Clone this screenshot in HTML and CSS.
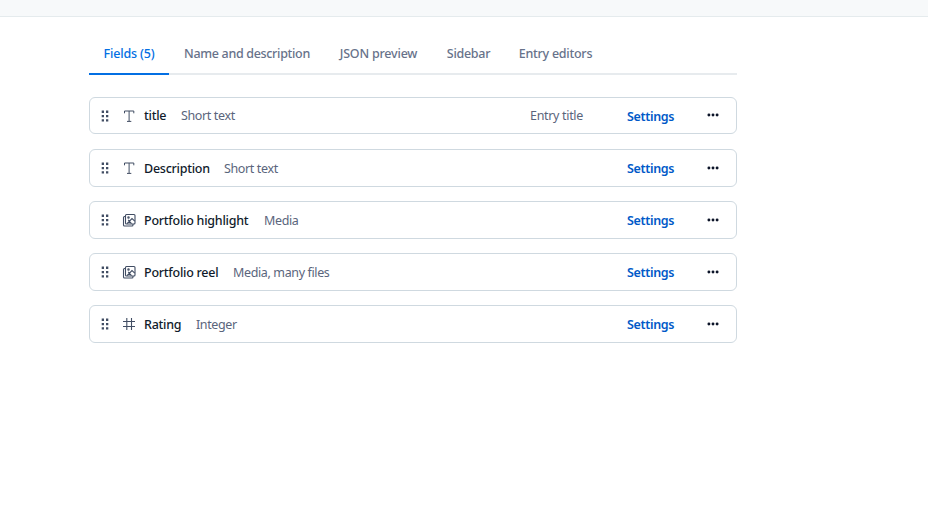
FILE: index.html
```html
<!DOCTYPE html>
<html lang="en">
<head>
<meta charset="utf-8">
<title>Content model fields</title>
<link rel="stylesheet" href="styles.css">
</head>
<body>
<svg class="defs" width="0" height="0">
  <symbol id="drag" viewBox="0 0 8 12"><path d="M.7 .6h2.300v2.300h-2.300zM5 .6h2.300v2.300h-2.300zM.7 4.900h2.300v2.300h-2.300zM5 4.900h2.300v2.300h-2.300zM.7 9.200h2.300v2.300h-2.300zM5 9.200h2.300v2.300h-2.300z" fill="currentColor"/></symbol>
  <symbol id="text" viewBox="0 0 14 14"><path d="M2.500 4.300V2H11.800V4.300M7.100 2V12.300M5 12.400H9.300" fill="none" stroke="currentColor"/></symbol>
  <symbol id="media" viewBox="0 0 14 14"><g fill="none" stroke="currentColor" stroke-width="1.100"><rect x="3.500" y="1.500" width="9.500" height="9.500" rx="1"/><path d="M3.500 3.500H2.500Q1.500 3.500 1.500 4.500V12Q1.500 13 2.500 13H10Q11 13 11 12V11M5 10.700L10 5.600L12.800 8.100M6.200 6.800L9.500 10.700"/><circle cx="6.500" cy="4.500" r=".7"/></g></symbol>
  <symbol id="number" viewBox="0 0 14 14"><path d="M4.800 1V13M9.500 1V13M1 4.500H13M1 9.500H13" fill="none" stroke="currentColor" stroke-width="1.100"/></symbol>
  <symbol id="more" viewBox="0 0 12 4"><g fill="currentColor"><circle cx="1.900" cy="2" r="1.450"/><circle cx="6" cy="2" r="1.450"/><circle cx="10.100" cy="2" r="1.450"/></g></symbol>
</svg>
<header class="topbar"></header>
<main class="content">
  <nav class="tabs">
    <a class="tab active">Fields (5)</a>
    <a class="tab tab-name">Name and description</a>
    <a class="tab tab-json">JSON preview</a>
    <a class="tab tab-sidebar">Sidebar</a>
    <a class="tab tab-editors">Entry editors</a>
  </nav>
  <section class="fields">
    <div class="field first"><svg class="drag"><use href="#drag"/></svg><svg class="type"><use href="#text"/></svg><span class="name n-title">title</span><span class="kind">Short text</span><span class="entry">Entry title</span><a class="settings">Settings</a><svg class="more"><use href="#more"/></svg></div>
    <div class="field"><svg class="drag"><use href="#drag"/></svg><svg class="type"><use href="#text"/></svg><span class="name n-description">Description</span><span class="kind">Short text</span><a class="settings">Settings</a><svg class="more"><use href="#more"/></svg></div>
    <div class="field"><svg class="drag"><use href="#drag"/></svg><svg class="type"><use href="#media"/></svg><span class="name n-highlight">Portfolio highlight</span><span class="kind">Media</span><a class="settings">Settings</a><svg class="more"><use href="#more"/></svg></div>
    <div class="field"><svg class="drag"><use href="#drag"/></svg><svg class="type"><use href="#media"/></svg><span class="name n-reel">Portfolio reel</span><span class="kind">Media, many files</span><a class="settings">Settings</a><svg class="more"><use href="#more"/></svg></div>
    <div class="field"><svg class="drag"><use href="#drag"/></svg><svg class="type"><use href="#number"/></svg><span class="name n-rating">Rating</span><span class="kind">Integer</span><a class="settings">Settings</a><svg class="more"><use href="#more"/></svg></div>
  </section>
</main>
</body>
</html>
```
FILE: styles.css
```css
* { box-sizing: border-box; }
body { margin: 0; background: #fff; color: #111b2b; font-family: "Noto Sans", "Open Sans", sans-serif; font-size: 12.5px; line-height: 18px; }
.defs { display: block; }
.topbar { height: 17px; background: #f7f9fa; border-bottom: 1px solid #e5ebed; }
.content { width: 648px; margin-left: 89px; padding-top: 17px; }
.tabs { display: flex; height: 41px; box-shadow: inset 0 -2px #e7ebee; }
.tab { display: flex; justify-content: center; padding-top: 11px; width: 80px; color: #67728a; font-weight: 550; letter-spacing: -.2px; white-space: nowrap; }
.active { color: #036fe3; border-bottom: 2px solid #036fe3; letter-spacing: -.15px; }
.tab-name { width: 156px; letter-spacing: -.32px; }
.tab-json { width: 107px; }
.tab-sidebar { width: 73px; letter-spacing: -.3px; }
.tab-editors { width: 101px; letter-spacing: -.26px; }
.fields { display: grid; row-gap: 14px; margin-top: 22px; }
.field { display: flex; align-items: center; height: 38px; padding: 0 17px 0 11px; border: 1px solid #cfd9e0; border-radius: 6px; white-space: nowrap; letter-spacing: -.25px; }
.first { height: 37px; margin-bottom: 1px; }
.drag { width: 8px; height: 12px; color: #414d63; flex: none; }
.type { width: 14px; height: 14px; margin-left: 13px; color: #414d63; flex: none; }
.name { margin-left: 8px; font-weight: 500; flex: none; }
.n-title { width: 37px; }
.n-description { width: 80px; }
.n-highlight { width: 120px; }
.n-reel { width: 89px; }
.n-rating { width: 52px; }
.kind { color: #5a657c; letter-spacing: -.37px; }
.field:not(.first) > .name, .field:not(.first) > .kind, .settings { padding-top: 2px; }
.entry { margin-left: auto; width: 97px; color: #5a657c; letter-spacing: -.32px; }
.settings { width: 80px; margin-left: auto; color: #0059c8; font-weight: 600; letter-spacing: -.35px; }
.entry + .settings { margin-left: 0; }
.more { width: 12px; height: 4px; color: #0c1428; flex: none; }
.first .more { margin-top: -1px; }
```
